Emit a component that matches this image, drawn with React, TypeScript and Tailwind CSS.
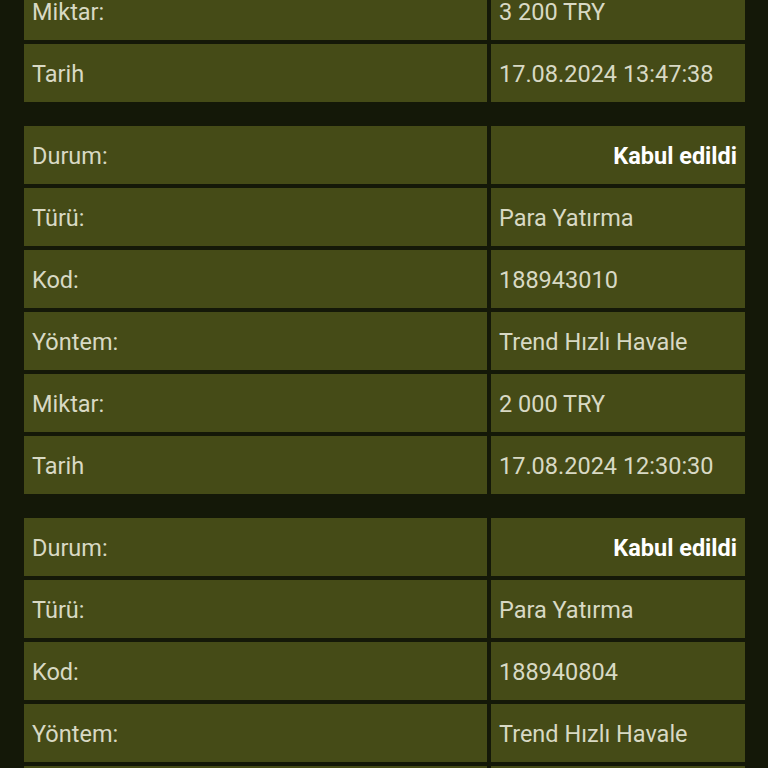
const transactions = [
    { code: "188945122", method: "Trend Hızlı Havale", amount: "3 200 TRY", date: "17.08.2024 13:47:38" },
    { code: "188943010", method: "Trend Hızlı Havale", amount: "2 000 TRY", date: "17.08.2024 12:30:30" },
    { code: "188940804", method: "Trend Hızlı Havale", amount: "1 500 TRY", date: "17.08.2024 11:52:14" },
]

function Row({ label, value, bold }: { label: string; value: string; bold?: boolean }) {
    return (
        <>
            <div className="h-[58px] flex items-center pl-2 pt-[3px] bg-[#454b17]">{label}</div>
            <div
                className={
                    bold
                        ? "h-[58px] flex items-center justify-end pr-2 pt-[3px] bg-[#454b17] font-bold text-white"
                        : "h-[58px] flex items-center pl-2 pt-[3px] bg-[#454b17]"
                }
            >
                {value}
            </div>
        </>
    )
}

export default function App() {
    return (
        <div
            className="min-h-screen bg-[#141808] overflow-hidden text-[23.5px] text-[#d8d9c4]"
            style={{ fontFamily: "Roboto, 'Noto Sans', sans-serif" }}
        >
            <div className="mt-[-266px] pl-6 pr-[23px] flex flex-col gap-[24px]">
                {transactions.map((t, i) => (
                    <div key={i} className="grid grid-cols-[463px_1fr] gap-1">
                        <Row label="Durum:" value="Kabul edildi" bold />
                        <Row label="Türü:" value="Para Yatırma" />
                        <Row label="Kod:" value={t.code} />
                        <Row label="Yöntem:" value={t.method} />
                        <Row label="Miktar:" value={t.amount} />
                        <Row label="Tarih" value={t.date} />
                    </div>
                ))}
            </div>
        </div>
    )
}
